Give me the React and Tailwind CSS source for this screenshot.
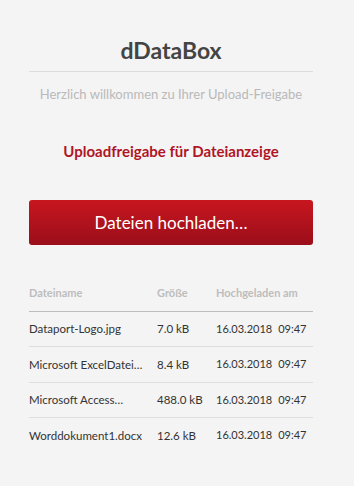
const files = [
  { name: 'Dataport-Logo.jpg', size: '7.0 kB', date: '16.03.2018', time: '09:47' },
  { name: 'Microsoft ExcelDatei…', size: '8.4 kB', date: '16.03.2018', time: '09:47' },
  { name: 'Microsoft Access…', size: '488.0 kB', date: '16.03.2018', time: '09:47' },
  { name: 'Worddokument1.docx', size: '12.6 kB', date: '16.03.2018', time: '09:47' },
];

export default function App() {
  return (
    <div className="w-[354px] h-[486px] bg-[#f4f4f4] font-['Lato',sans-serif] overflow-hidden">
      <div className="ml-[29px] w-[284px] pt-[36px]">
        <h1 className="text-center text-[23px] leading-[28px] font-bold text-[#444]">dDataBox</h1>
        <div className="mt-[7px] h-px bg-[#dcdcdc]" />
        <p className="mt-[14px] text-center text-[13px] leading-[16px] text-[#b9b9b9]">
          Herzlich willkommen zu Ihrer Upload-Freigabe
        </p>

        <h2 className="mt-[39px] text-center text-[15px] leading-[20px] font-bold text-[#b01525]">
          Uploadfreigabe für Dateianzeige
        </h2>

        <button className="mt-[39px] w-full h-[45px] rounded-[3px] bg-gradient-to-b from-[#c8161f] to-[#9a0e1a] text-white text-[17px] leading-none">
          Dateien hochladen…
        </button>

        <table className="mt-[38px] w-full table-fixed border-collapse text-left">
          <colgroup>
            <col className="w-[128px]" />
            <col className="w-[59px]" />
            <col />
          </colgroup>
          <thead>
            <tr className="border-b border-[#bcbcbc]">
              <th className="h-[28px] align-top pt-[2px] text-[11px] font-bold text-[#bdbdbd]">Dateiname</th>
              <th className="h-[28px] align-top pt-[2px] text-[11px] font-bold text-[#bdbdbd]">Größe</th>
              <th className="h-[28px] align-top pt-[2px] text-[11px] font-bold text-[#bdbdbd]">Hochgeladen am</th>
            </tr>
          </thead>
          <tbody>
            {files.map((f, i) => (
              <tr key={f.name} className={i < files.length - 1 ? 'border-b border-[#dedede]' : ''}>
                <td className="h-[35.5px] pr-[6px] text-[11.5px] text-[#333] whitespace-nowrap">{f.name}</td>
                <td className="h-[35.5px] text-[11.5px] text-[#333] whitespace-nowrap">{f.size}</td>
                <td className="h-[35.5px] text-[11px] text-[#333] whitespace-nowrap">
                  {f.date}
                  <span className="ml-[6px]">{f.time}</span>
                </td>
              </tr>
            ))}
          </tbody>
        </table>
      </div>
    </div>
  );
}
